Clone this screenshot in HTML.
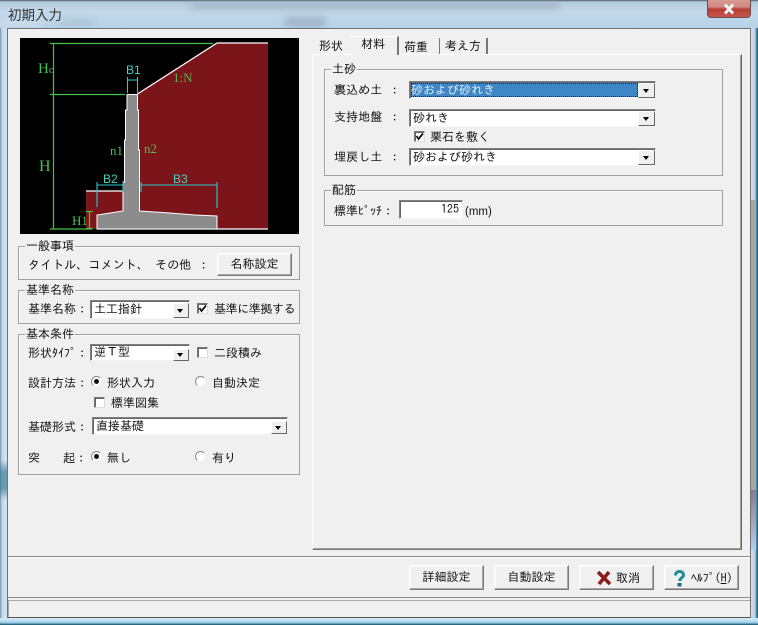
<!DOCTYPE html>
<html lang="ja"><head><meta charset="utf-8"><title>初期入力</title>
<style>
*{box-sizing:border-box}
html,body{margin:0;padding:0}
body{width:758px;height:625px;overflow:hidden;position:relative;background:#bcd4e6;font-family:"IPAGothic","Liberation Sans","Noto Sans CJK JP",sans-serif;font-size:12px;color:#111}
.a{position:absolute}
.t{position:absolute;white-space:nowrap;line-height:14px;height:14px}
.win{position:absolute;left:0;top:0;width:758px;height:625px;background:linear-gradient(90deg,#5f7f96 0,#a9c4d8 1px,#c8dcea 3px,#d2e2ee 7px,#d2e2ee 751px,#b5cfe2 755px,#2f6f96 757px,#1c5c80 758px)}
.title{position:absolute;left:0;top:0;width:758px;height:28px;overflow:hidden;background:linear-gradient(180deg,#4d5a64 0,#b4cbde 2px,#c4d9e9 12px,#b6d2e8 28px)}
.title b{position:absolute;display:block;filter:blur(4px);opacity:.7}
.client{position:absolute;left:7px;top:28px;width:744px;height:590px;background:#f0f0f0;border:1px solid #6e7378;border-bottom-color:#555}
.g{position:absolute;border:1px solid #a0a0a0;box-shadow:inset 1px 1px 0 #fafafa}
.g>span{position:absolute;left:6px;top:-8px;background:#f0f0f0;padding:0 1px;line-height:14px;white-space:nowrap}
.btn{position:absolute;background:#f0f0f0;border:1px solid;border-color:#fff #7a7a7a #7a7a7a #fff;box-shadow:inset -1px -1px 0 #a8a8a8,inset 1px 1px 0 #f8f8f8;text-align:center;white-space:nowrap}
.sel{position:absolute;background:#fff;border:1px solid;border-color:#808080 #f4f4f4 #f4f4f4 #808080;box-shadow:inset 1px 1px 0 #666;padding:1px 0 0 3px;line-height:14px;white-space:nowrap}
.sel i{position:absolute;right:0;top:1px;bottom:0;width:17px;background:#f0f0f0;border:1px solid;border-color:#fff #666 #666 #fff}
.sel i:after{content:"";position:absolute;left:50%;top:50%;margin:-2px 0 0 -4px;border:3.500px solid transparent;border-top:4px solid #000;border-bottom:0}
.cb{position:absolute;width:11px;height:11px;background:#fff;border:1px solid;border-color:#777 #ddd #ddd #777;box-shadow:inset 1px 1px 0 #666}
.rd{position:absolute;width:11px;height:11px;border-radius:50%;background:#fff;border:1px solid;border-color:#888 #eee #eee #888}
.rd.on:after{content:"";position:absolute;left:2px;top:2px;width:5px;height:5px;border-radius:50%;background:#111}
</style></head><body>
<div class="win"></div>
<div class="a" style="left:0;top:460px;width:7px;height:40px;background:linear-gradient(180deg,transparent,#3f7f9a 30%,#3f7f9a 70%,transparent);opacity:.7"></div>
<div class="a" style="left:751px;top:200px;width:5px;height:290px;background:#a8a8a8"></div>
<div class="a" style="left:751px;top:490px;width:5px;height:60px;background:linear-gradient(180deg,#8a7a90,#b5cfe2)"></div>
<div class="a" style="left:0;top:618px;width:758px;height:7px;background:linear-gradient(180deg,#d8eaf4 0,#b4dcf0 50%,#8fc6e0 70%,#2f6f86 90%,#1c5468 100%)"></div>
<div class="title">
<b style="left:190px;top:3px;width:370px;height:6px;background:#93a5b6"></b>
<b style="left:285px;top:18px;width:40px;height:8px;background:#8b9dae"></b>
<b style="left:60px;top:20px;width:35px;height:6px;background:#a5b8c8"></b>
<b style="left:0;top:20px;width:40px;height:8px;background:#d6e2ec"></b>
</div>
<div class="t" style="left:8px;top:5px;font:13.500px/18px 'Noto Sans CJK JP',sans-serif;height:18px;color:#333">初期入力</div>
<div class="a" style="left:707px;top:0;width:44px;height:18px;border-radius:0 0 4px 4px;border:1px solid #6b4a48;border-top:0;background:linear-gradient(180deg,#d99a94 0,#d08a84 40%,#b83c32 55%,#c45a50 100%)"></div>
<svg class="a" style="left:723px;top:3px" width="12" height="12"><path d="M2 1.500L10 10.500M10 1.500L2 10.500" stroke="#f4f4f4" stroke-width="3"/></svg>
<div class="client"></div>

<!-- diagram -->
<svg class="a" style="left:20px;top:38px" width="279" height="196" viewBox="20 38 279 196" font-family="Liberation Serif,serif">
<rect x="20" y="38" width="279" height="196" fill="#000"/>
<path d="M137 94L217 43H268V229H86V191H127L137 94Z" fill="#7c1519"/>
<path d="M86 191H124M137.500 94L217 43H268M97 229H268" stroke="#fff" stroke-width="1.300" fill="none"/>
<path d="M127 94.500H137.500V110H138.500V150H139.500V211L170 213L195 215L217 216V229H97V215L110 213L123 211V182H124.500V140H125.500V110H127Z" fill="#8c8c8c" stroke="#fff" stroke-width="1"/>
<path d="M50 43.500H213M53.500 43V229M50 94.500H125M50 229H92M89.500 211V229M86 211.500H93M86 228.500H93" stroke="#44c24a" stroke-width="1.200" fill="none"/>
<path d="M127.500 77V93M137.500 77V93M127.500 80H137.500M97 182V207M123 182V192M97 185H123M141 182V192M141 185H217M217 182V208" stroke="#2cc8cc" stroke-width="1.100" fill="none"/>
<g fill="#46c24e">
<text x="38" y="73" font-size="15">H<tspan font-size="11">o</tspan></text>
<text x="39" y="171" font-size="16">H</text>
<text x="72" y="225" font-size="13">H1</text>
<text x="173" y="82" font-size="13" fill="#5cb050">1:N</text>
<text x="110" y="155" font-size="13">n1</text>
<text x="144" y="153" font-size="13">n2</text>
</g>
<g fill="#45d0c4" font-size="12" font-family="Liberation Sans,sans-serif">
<text x="126" y="74">B1</text><text x="103" y="183">B2</text><text x="173" y="183">B3</text>
</g>
</svg>

<!-- left groups -->
<div class="g" style="left:18px;top:246px;width:282px;height:34px"><span>一般事項</span></div>
<div class="t" style="left:28px;top:258px;letter-spacing:.1px">タイトル、コメント、 その他 ：</div>
<div class="btn" style="left:217px;top:253px;width:75px;height:23px;line-height:20px">名称設定</div>

<div class="g" style="left:18px;top:290px;width:282px;height:34px"><span>基準名称</span></div>
<div class="t" style="left:28px;top:302px">基準名称：</div>
<div class="sel" style="left:90px;top:300px;width:100px;height:19px">土工指針<i style="top:2px;width:16px"></i></div>
<div class="cb" style="left:197px;top:303px"></div>
<svg class="a" style="left:198px;top:304px" width="9" height="9"><path d="M1.500 4L3.500 7L8 1.500" stroke="#111" stroke-width="1.800" fill="none"/></svg>
<div class="t" style="left:214px;top:302px;letter-spacing:-.4px">基準に準拠する</div>

<div class="g" style="left:18px;top:334px;width:282px;height:141px"><span>基本条件</span></div>
<div class="t" style="left:28px;top:346px">形状ﾀｲﾌﾟ：</div>
<div class="sel" style="left:90px;top:344px;width:100px;height:17px;padding-top:0">逆Ｔ型<i style="top:4px;width:16px;height:12px"></i></div>
<div class="cb" style="left:197px;top:347px"></div>
<div class="t" style="left:214px;top:346px">二段積み</div>
<div class="t" style="left:28px;top:376px">設計方法：</div>
<div class="rd on" style="left:91px;top:376px"></div>
<div class="t" style="left:107px;top:376px">形状入力</div>
<div class="rd" style="left:195px;top:376px"></div>
<div class="t" style="left:212px;top:376px">自動決定</div>
<div class="cb" style="left:94px;top:397px"></div>
<div class="t" style="left:111px;top:396px">標準図集</div>
<div class="t" style="left:28px;top:420px">基礎形式：</div>
<div class="sel" style="left:92px;top:417px;width:196px;height:18px;padding-top:1px">直接基礎<i style="top:3px;width:16px;height:13px"></i></div>
<div class="t" style="left:28px;top:451px">突</div>
<div class="t" style="left:63px;top:451px">起：</div>
<div class="rd on" style="left:91px;top:451px"></div>
<div class="t" style="left:107px;top:451px">無し</div>
<div class="rd" style="left:195px;top:451px"></div>
<div class="t" style="left:212px;top:451px">有り</div>

<!-- tab panel -->
<div class="a" style="left:312px;top:54px;width:430px;height:496px;background:#f0f0f0;border:1px solid;border-color:#fff #666 #777 #fff;box-shadow:inset -1px -1px 0 #a0a0a0"></div>
<div class="a" style="left:351px;top:36px;width:48px;height:19px;background:#f0f0f0;border-right:2px solid #777;border-top:1px solid #fff"></div>
<div class="a" style="left:439px;top:38px;width:1px;height:16px;background:#777"></div>
<div class="a" style="left:486px;top:38px;width:2px;height:16px;background:#777"></div>
<div class="t" style="left:319px;top:39px">形状</div>
<div class="t" style="left:361px;top:37px">材料</div>
<div class="t" style="left:404px;top:40px">荷重</div>
<div class="t" style="left:445px;top:39px">考え方</div>

<div class="g" style="left:324px;top:69px;width:399px;height:107px"><span>土砂</span></div>
<div class="t" style="left:334px;top:83px;letter-spacing:.1px">裏込め土 ：</div>
<div class="sel" style="left:409px;top:81px;width:247px;height:18px"><i style="width:17px"></i></div>
<div class="a" style="left:411px;top:83px;width:227px;height:14px;background:#3f86c6;outline:1px dotted #222;outline-offset:-1px"></div>
<div class="t" style="left:411px;top:83px;color:#dfeaf5">砂および砂れき</div>
<div class="t" style="left:334px;top:110px;letter-spacing:.1px">支持地盤 ：</div>
<div class="sel" style="left:409px;top:109px;width:247px;height:18px">砂れき<i></i></div>
<div class="cb" style="left:414px;top:131px"></div>
<svg class="a" style="left:415px;top:132px" width="9" height="9"><path d="M1.500 4L3.500 7L8 1.500" stroke="#111" stroke-width="1.800" fill="none"/></svg>
<div class="t" style="left:430px;top:130px">栗石を敷く</div>
<div class="t" style="left:334px;top:150px;letter-spacing:.1px">埋戻し土 ：</div>
<div class="sel" style="left:409px;top:148px;width:247px;height:18px">砂および砂れき<i></i></div>

<div class="g" style="left:324px;top:190px;width:399px;height:36px"><span>配筋</span></div>
<div class="t" style="left:334px;top:204px">標準ﾋﾟｯﾁ：</div>
<div class="sel" style="left:399px;top:200px;width:64px;height:19px;text-align:right;padding:1px 3px 0 0">125</div>
<div class="t" style="left:465px;top:205px;font-family:'Liberation Sans',sans-serif;font-size:11.500px">(mm)</div>

<!-- bottom -->
<div class="a" style="left:8px;top:556px;width:742px;height:1px;background:#8c8c8c"></div>
<div class="a" style="left:8px;top:557px;width:742px;height:1px;background:#fbfbfb"></div>
<div class="a" style="left:8px;top:597px;width:742px;height:1px;background:#8c8c8c"></div>
<div class="a" style="left:8px;top:600px;width:742px;height:1px;background:#a8a8a8"></div>
<div class="a" style="left:8px;top:600px;width:1px;height:17px;background:#a8a8a8"></div>

<div class="btn" style="left:409px;top:565px;width:75px;height:25px;line-height:22px">詳細設定</div>
<div class="btn" style="left:494px;top:565px;width:75px;height:25px;line-height:22px">自動設定</div>
<div class="btn" style="left:579px;top:565px;width:75px;height:25px"></div>
<svg class="a" style="left:596px;top:570px" width="16" height="16"><path d="M2 2L14 14M13 2L3 14" stroke="#8a1c1c" stroke-width="3.600" fill="none"/></svg>
<div class="t" style="left:616px;top:571px">取消</div>
<div class="btn" style="left:664px;top:565px;width:75px;height:25px"></div>
<svg class="a" style="left:673px;top:570px" width="13" height="17"><path d="M2.500 5.500C2.500 2.500 4.500 1.500 6.500 1.500C9.500 1.500 10.500 3.500 10.500 5C10.500 7.500 7 8 6.500 11" stroke="#1f8a9e" stroke-width="3" fill="none"/><rect x="4.500" y="13" width="4" height="3.500" fill="#1b6f80"/></svg>
<div class="t" style="left:691px;top:571px;letter-spacing:-.1px">ﾍﾙﾌﾟ(<u>H</u>)</div>
</body></html>
